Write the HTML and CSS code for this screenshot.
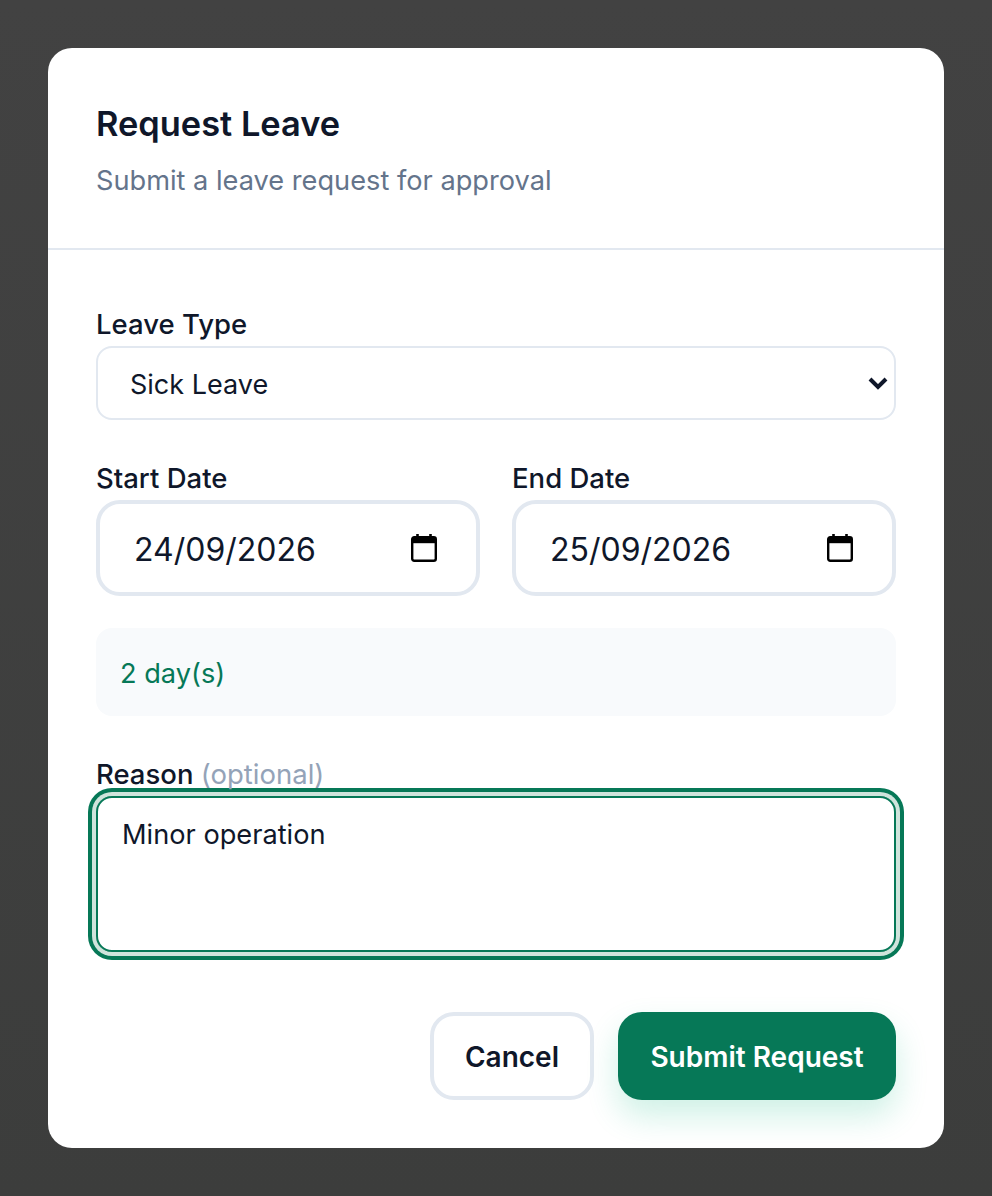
FILE: index.html
```html
<!DOCTYPE html>
<html lang="en">
<head>
    <meta charset="UTF-8">
    <meta name="viewport" content="width=device-width, initial-scale=1.0">
    <title>Request Leave</title>
    <link rel="stylesheet" href="styles.css">
</head>
<body>
    <div class="modal">
        <div class="modal-header">
            <h2 class="modal-title">Request Leave</h2>
            <p class="modal-subtitle">Submit a leave request for approval</p>
        </div>
        <form class="modal-body">
            <div class="field">
                <div class="label">Leave Type</div>
                <div class="select">
                    <span class="select-value">Sick Leave</span>
                    <svg class="chevron" width="22" height="14" viewBox="0 0 22 14"><path d="M3 3l8 8 8-8" fill="none" stroke="#0f172a" stroke-width="4"/></svg>
                </div>
            </div>
            <div class="date-row">
                <div class="field">
                    <div class="label">Start Date</div>
                    <div class="date-input">
                        <span>24/09/2026</span>
                        <svg class="calendar" width="26" height="28" viewBox="0 0 26 28"><path d="M6.5 0v4M19.5 0v4" stroke="#000" stroke-width="2.6"/><rect x="1.2" y="3.2" width="23.6" height="23.6" rx="2" fill="none" stroke="#000" stroke-width="2.4"/><rect x="1.2" y="3.2" width="23.6" height="6" fill="#000"/></svg>
                    </div>
                </div>
                <div class="field">
                    <div class="label">End Date</div>
                    <div class="date-input">
                        <span>25/09/2026</span>
                        <svg class="calendar" width="26" height="28" viewBox="0 0 26 28"><path d="M6.5 0v4M19.5 0v4" stroke="#000" stroke-width="2.6"/><rect x="1.2" y="3.2" width="23.6" height="23.6" rx="2" fill="none" stroke="#000" stroke-width="2.4"/><rect x="1.2" y="3.2" width="23.6" height="6" fill="#000"/></svg>
                    </div>
                </div>
            </div>
            <div class="summary">2 day(s)</div>
            <div class="field reason">
                <div class="label">Reason <span class="optional">(optional)</span></div>
                <div class="textarea">Minor operation</div>
            </div>
            <div class="actions">
                <button type="button" class="btn btn-cancel">Cancel</button>
                <button type="button" class="btn btn-submit">Submit Request</button>
            </div>
        </form>
    </div>
</body>
</html>
```
FILE: styles.css
```css
:root {
    --ink: #0f172a;
    --green: #067857;
    --line: #e2e8f0;
}

* {
    box-sizing: border-box;
}

body {
    margin: 0;
    min-height: 1196px;
    padding: 48px;
    background: linear-gradient(to bottom, #424242, #3c3d3c);
    font-family: Inter, "Liberation Sans", sans-serif;
    color: var(--ink);
    overflow: hidden;
}

.modal {
    height: 1100px;
    background: #fff;
    border-radius: 24px;
}

.modal-header {
    height: 202px;
    padding: 54px 48px 0;
    border-bottom: 2px solid var(--line);
}

.modal-title {
    margin: 0;
    font-size: 34.4px;
    line-height: 44px;
    font-weight: 600;
}

.modal-subtitle {
    margin: 17px 0 0;
    font-size: 27.2px;
    line-height: 36px;
    color: #64748b;
}

.modal-body {
    padding: 56px 48px 0;
}

.field {
    flex: 1;
}

.label {
    height: 40px;
    font-size: 27.5px;
    line-height: 36px;
    font-weight: 500;
}

.optional {
    font-weight: 400;
    color: #94a3b8;
}

.select {
    display: flex;
    align-items: center;
    justify-content: space-between;
    height: 74px;
    padding: 0 5px 0 32px;
    border: 2px solid var(--line);
    border-radius: 16px;
    font-size: 27px;
}

.select-value {
    padding-top: 2px;
}

.date-row {
    display: flex;
    gap: 32px;
    margin-top: 40px;
}

.date-input {
    display: flex;
    align-items: center;
    justify-content: space-between;
    height: 96px;
    padding: 0 39px 0 34px;
    border: 4px solid var(--line);
    border-radius: 24px;
    font-size: 32px;
}

.date-input span {
    padding-top: 2px;
}

.summary {
    height: 88px;
    margin-top: 32px;
    padding: 0 24px;
    background: #f8fafc;
    border-radius: 16px;
    font-size: 27.2px;
    line-height: 92px;
    color: var(--green);
}

.reason {
    margin-top: 40px;
}

.textarea {
    height: 156px;
    padding: 19px 24px;
    border: 2px solid var(--green);
    border-radius: 16px;
    box-shadow: 0 0 0 4px #cfe4dc, 0 0 0 8px var(--green);
    font-size: 27.2px;
    line-height: 36px;
}

.actions {
    display: flex;
    justify-content: flex-end;
    gap: 24px;
    margin-top: 60px;
}

.btn {
    height: 88px;
    padding-top: 2px;
    border-radius: 24px;
    font-family: inherit;
    font-size: 28px;
    font-weight: 600;
}

.btn-cancel {
    width: 164px;
    background: #fff;
    border: 4px solid var(--line);
    color: var(--ink);
}

.btn-submit {
    width: 278px;
    background: var(--green);
    border: none;
    color: #fff;
    box-shadow: 0 16px 32px rgba(16, 185, 129, 0.2);
}
```
